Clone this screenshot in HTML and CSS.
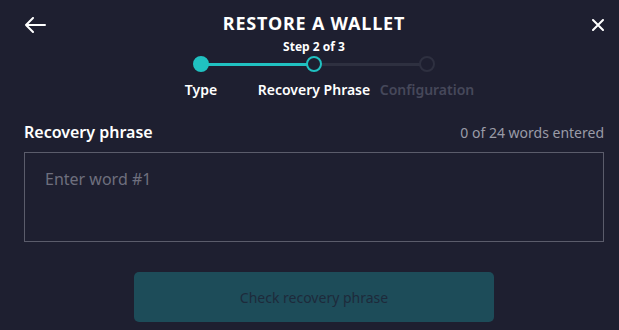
FILE: index.html
```html
<!DOCTYPE html>
<html lang="en">
<head>
    <meta charset="UTF-8">
    <meta name="viewport" content="width=device-width, initial-scale=1.0">
    <title>Restore a Wallet</title>
    <link rel="stylesheet" href="styles.css">
</head>
<body>
    <div class="dialog">
        <div class="header">
            <button class="iconButton back" aria-label="Back">
                <svg width="22" height="16" viewBox="0 0 22 16">
                    <path d="M21 8H2M9 1L2 8l7 7" fill="none" stroke="#fff" stroke-width="2" stroke-linecap="round" stroke-linejoin="round"/>
                </svg>
            </button>
            <div class="titleBlock">
                <h1 class="title">RESTORE A WALLET</h1>
                <div class="stepCount">Step 2 of 3</div>
            </div>
            <button class="iconButton close" aria-label="Close">
                <svg width="12" height="12" viewBox="0 0 12 12">
                    <path d="M1 1l10 10M11 1L1 11" fill="none" stroke="#fff" stroke-width="2" stroke-linecap="round"/>
                </svg>
            </button>
        </div>

        <div class="stepper">
            <div class="step done">
                <span class="dot"></span>
                <span class="stepLabel">Type</span>
            </div>
            <div class="step current">
                <span class="dot"></span>
                <span class="stepLabel">Recovery Phrase</span>
            </div>
            <div class="step">
                <span class="dot"></span>
                <span class="stepLabel">Configuration</span>
            </div>
        </div>

        <div class="fieldHead">
            <label for="phraseInput" class="fieldLabel">Recovery phrase</label>
            <span class="wordCount">0 of 24 words entered</span>
        </div>
        <div class="phraseBox">
            <input type="text" id="phraseInput" placeholder="Enter word #1">
        </div>

        <div class="actions">
            <button class="checkButton" disabled>Check recovery phrase</button>
        </div>
    </div>
</body>
</html>
```

FILE: styles.css
```css
/* Reset default styles */
* {
  margin: 0;
  padding: 0;
  box-sizing: border-box;
}

body {
  font-family: "Noto Sans", "Open Sans", sans-serif;
  color: white;
  background-color: #1e1f30;
  width: 619px;
  height: 330px;
  overflow: hidden;
}

.dialog {
  padding: 0 15px 0 24px;
}

.header {
  display: grid;
  grid-template-columns: 1fr auto 1fr;
  align-items: start;
  padding-top: 11px;
}

.iconButton {
  border: none;
  background: none;
  cursor: pointer;
  display: flex;
  align-items: center;
  height: 28px;
}

.iconButton.close {
  justify-self: end;
}

.titleBlock {
  display: flex;
  flex-direction: column;
  align-items: center;
}

.title {
  font-size: 18px;
  font-weight: 700;
  letter-spacing: 0.8px;
  line-height: 24px;
}

.stepCount {
  font-size: 12px;
  font-weight: 700;
  line-height: 16px;
  margin-top: 4px;
}

/* Stepper */
.stepper {
  display: flex;
  justify-content: center;
  margin-top: 1px;
}

.step {
  position: relative;
  display: flex;
  flex-direction: column;
  align-items: center;
  width: 113px;
}

.step + .step::before {
  content: "";
  position: absolute;
  top: 7px;
  right: 50%;
  width: 113px;
  height: 3px;
  background-color: #2e3040;
}

.step.done + .step::before {
  background-color: #20c1c1;
}

.dot {
  position: relative;
  z-index: 1;
  width: 16px;
  height: 16px;
  border-radius: 50%;
  border: 2px solid #2e3040;
  background-color: #1e1f30;
}

.step.done .dot {
  background-color: #20c1c1;
  border-color: #20c1c1;
}

.step.current .dot {
  border-color: #20c1c1;
}

.stepLabel {
  font-size: 14px;
  font-weight: 600;
  line-height: 20px;
  margin-top: 8px;
  white-space: nowrap;
  color: #46485a;
}

.step.done .stepLabel,
.step.current .stepLabel {
  color: white;
}

/* Recovery phrase field */
.fieldHead {
  display: flex;
  justify-content: space-between;
  align-items: baseline;
  margin-top: 21px;
}

.fieldLabel {
  font-size: 16px;
  font-weight: 600;
  line-height: 22px;
}

.wordCount {
  font-size: 14px;
  color: #9a9ba7;
}

.phraseBox {
  margin-top: 9px;
  height: 90px;
  border: 1px solid #5b5c6b;
  padding: 15px 20px;
}

.phraseBox input {
  width: 100%;
  border: none;
  outline: none;
  background: none;
  font-family: inherit;
  font-size: 16px;
  color: white;
}

.phraseBox input::placeholder {
  color: #6e6f7e;
}

.actions {
  display: flex;
  justify-content: center;
  margin-top: 30px;
}

.checkButton {
  width: 360px;
  height: 50px;
  border: none;
  border-radius: 5px;
  background-color: #1d4c59;
  color: #1d2a3b;
  font-family: inherit;
  font-size: 14px;
}
```
